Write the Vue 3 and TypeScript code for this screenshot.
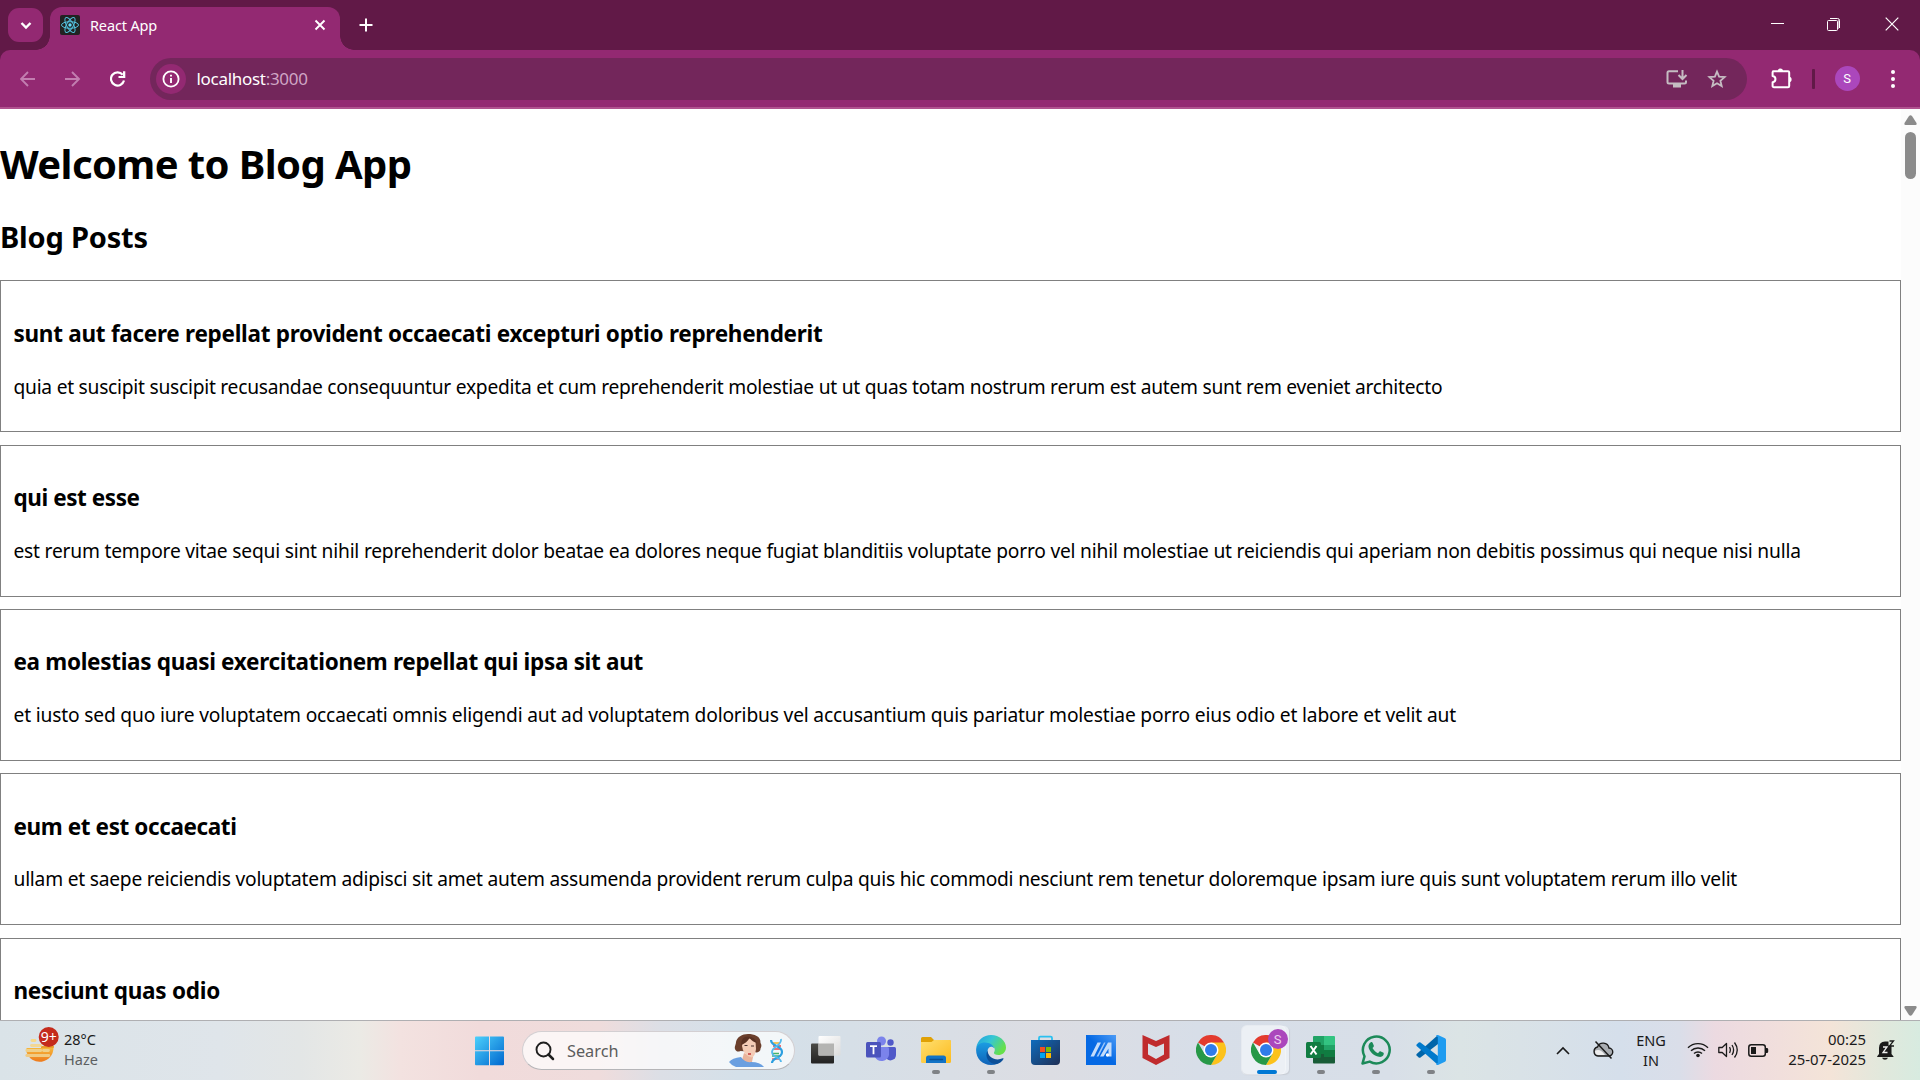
<script setup lang="ts">
interface Post {
  title: string
  body: string
  titleSpacing: number
  bodySpacing: number
}

const posts: Post[] = [
  { title: 'sunt aut facere repellat provident occaecati excepturi optio reprehenderit', body: 'quia et suscipit suscipit recusandae consequuntur expedita et cum reprehenderit molestiae ut ut quas totam nostrum rerum est autem sunt rem eveniet architecto', titleSpacing: -0.276, bodySpacing: -0.247 },
  { title: 'qui est esse', body: 'est rerum tempore vitae sequi sint nihil reprehenderit dolor beatae ea dolores neque fugiat blanditiis voluptate porro vel nihil molestiae ut reiciendis qui aperiam non debitis possimus qui neque nisi nulla', titleSpacing: -0.436, bodySpacing: -0.203 },
  { title: 'ea molestias quasi exercitationem repellat qui ipsa sit aut', body: 'et iusto sed quo iure voluptatem occaecati omnis eligendi aut ad voluptatem doloribus vel accusantium quis pariatur molestiae porro eius odio et labore et velit aut', titleSpacing: -0.31, bodySpacing: -0.172 },
  { title: 'eum et est occaecati', body: 'ullam et saepe reiciendis voluptatem adipisci sit amet autem assumenda provident rerum culpa quis hic commodi nesciunt rem tenetur doloremque ipsam iure quis sunt voluptatem rerum illo velit', titleSpacing: -0.4, bodySpacing: -0.219 },
  { title: 'nesciunt quas odio', body: '', titleSpacing: -0.256, bodySpacing: 0 },
]
</script>

<template>
  <div class="screen">
    <header class="titlebar">
      <div class="tabsearch">
        <svg width="35" height="34" viewBox="0 0 35 34"><path d="M13.5 15l4.5 4.5 4.500-4.500" fill="none" stroke="#fff" stroke-width="2.400" /></svg>
      </div>
      <div class="tab">
        <svg class="favicon" width="20" height="20" viewBox="0 0 20 20">
          <rect width="20" height="20" rx="2" fill="#222" />
          <g fill="none" stroke="#53c1de" stroke-width="1">
            <ellipse cx="10" cy="10" rx="8.500" ry="3.300" />
            <ellipse cx="10" cy="10" rx="8.500" ry="3.300" transform="rotate(60 10 10)" />
            <ellipse cx="10" cy="10" rx="8.500" ry="3.300" transform="rotate(120 10 10)" />
          </g>
          <circle cx="10" cy="10" r="1.700" fill="#61dafb" />
        </svg>
        <span class="tabtitle">React App</span>
        <svg class="tabclose" width="12" height="12" viewBox="0 0 12 12"><path d="M1.500 1.500l9 9M10.500 1.500l-9 9" stroke="#fff" stroke-width="1.900" /></svg>
        <i class="flare left"></i><i class="flare right"></i>
      </div>
      <svg class="newtab" width="14" height="14" viewBox="0 0 14 14"><path d="M7 .5v13M.5 7h13" stroke="#fff" stroke-width="2" /></svg>
      <div class="winctl">
        <svg width="13" height="14" viewBox="0 0 13 14"><path d="M0 6.500h13" stroke="#fff" /></svg>
        <svg class="restore" width="13" height="14" viewBox="0 0 13 14"><rect x=".5" y="3.500" width="10" height="10" rx="1" fill="none" stroke="#fff" /><path d="M3 1.500h7.500q2 0 2 2v7.500" fill="none" stroke="#fff" /><path d="M11.500 3v9" stroke="#b78aa9" /></svg>
        <svg width="14" height="14" viewBox="0 0 14 14"><path d="M.7.7l12.600 12.600M13.300.7L.7 13.300" stroke="#fff" stroke-width="1.200" /></svg>
      </div>
    </header>

    <div class="toolbar-back">
      <div class="toolbar">
        <svg class="nav back" width="16" height="16" viewBox="0 0 16 16"><path d="M15 8H1.500M8 1L1 8l7 7" fill="none" stroke="#c27eb0" stroke-width="1.900" /></svg>
        <svg class="nav fwd" width="16" height="16" viewBox="0 0 16 16"><path d="M0 8H13.500M7 1l7 7-7 7" fill="none" stroke="#c27eb0" stroke-width="1.900" /></svg>
        <svg class="nav reload" width="16" height="16" viewBox="0 0 16 16"><path d="M12.700 3.700A6.600 6.600 0 1 0 14 9.500" fill="none" stroke="#fff" stroke-width="2.200" /><path d="M15.300.3V7H8.500V4.900H13V.3z" fill="#fff" /></svg>
        <div class="omnibox">
          <div class="info"><svg width="18" height="18" viewBox="0 0 18 18"><circle cx="9" cy="9" r="7.600" fill="none" stroke="#fff" stroke-width="1.800" /><path d="M9 8v5M9 4.800v1.800" stroke="#fff" stroke-width="1.900" /></svg></div>
          <span class="url">localhost<span class="port">:3000</span></span>
          <svg class="install" width="22" height="20" viewBox="0 0 22 20"><path d="M12 2.200H3q-1.500 0-1.500 1.500V13q0 1.500 1.500 1.500h15.500q1.500 0 1.500-1.500v-1.500" fill="none" stroke="#c5bcc2" stroke-width="2" /><rect x="7" y="14.500" width="8" height="4" fill="#c5bcc2" /><path d="M16.500 1v8M12.500 6l4 4 4-4" fill="none" stroke="#c5bcc2" stroke-width="2" /></svg>
          <svg class="star" width="20" height="20" viewBox="0 0 20 20"><path d="M10 2.600l2.100 5.100 5.500.4-4.200 3.600 1.300 5.400-4.700-2.900-4.700 2.900 1.300-5.400-4.200-3.600 5.500-.4z" fill="none" stroke="#c5bcc2" stroke-width="1.800" /></svg>
        </div>
        <svg class="ext" width="21" height="21" viewBox="0 0 21 21"><path d="M2 3.200h15q1.200 0 1.200 1.200v13.500q0 1.300-1.200 1.300H3q-1.400 0-1.400-1.300v-3.600c3.800-.5 3.800-5.900 0-6.400V4.400z" fill="none" stroke="#fff" stroke-width="2" stroke-linejoin="round" /><path d="M6.800 3a2.600 2.600 0 0 1 5.200 0zM18 8.800a2.600 2.600 0 0 1 0 5.200z" fill="#fff" /></svg>
        <i class="vsep"></i>
        <span class="avatar">S</span>
        <svg class="kebab" width="6" height="20" viewBox="0 0 6 20"><circle cx="3" cy="3" r="2" fill="#fff" /><circle cx="3" cy="10" r="2" fill="#fff" /><circle cx="3" cy="17" r="2" fill="#fff" /></svg>
      </div>
    </div>

    <main class="viewport">
      <div class="page">
        <h1>Welcome to Blog App</h1>
        <h2>Blog Posts</h2>
        <article v-for="p in posts" :key="p.title" class="post">
          <h3 :style="{ letterSpacing: p.titleSpacing + 'px' }">{{ p.title }}</h3>
          <p :style="{ letterSpacing: p.bodySpacing + 'px' }">{{ p.body }}</p>
        </article>
      </div>
      <div class="scrollbar">
        <svg width="13" height="10" viewBox="0 0 13 10"><path d="M5 1q1.500-1.500 3 0l4.500 7q.5 2-1 2h-10q-1.500 0-1-2z" fill="#8b8b8b" /></svg>
        <i class="thumb"></i>
        <svg class="down" width="13" height="10" viewBox="0 0 13 10"><path d="M5 9q1.500 1.500 3 0l4.500-7q.5-2-1-2h-10q-1.500 0-1 2z" fill="#8b8b8b" /></svg>
      </div>
    </main>

    <footer class="taskbar">
      <div class="weather">
        <svg width="36" height="36" viewBox="0 0 36 36">
          <defs><linearGradient id="sun" x1="0" y1="0" x2="0" y2="1"><stop offset="0" stop-color="#f6b73c" /><stop offset="1" stop-color="#ee7a1c" /></linearGradient></defs>
          <path d="M2.500 21H29.500A13.800 13.800 0 0 1 2.500 25z" fill="url(#sun)" />
          <path d="M17 21h12.800l.2-2H17z" fill="#eba02b" />
          <g stroke-linecap="round" stroke-width="2.800"><path d="M8 13.500h3" stroke="#f6d98a" /><path d="M7.500 18.500h9" stroke="#f3d793" /><path d="M2.800 23.500h14M19.500 23.500h5" stroke="#efd08a" /><path d="M2.800 28.500h22" stroke="#f0cb84" /></g>
          <circle cx="24.700" cy="10" r="10" fill="#c42b1c" />
          <text x="24.700" y="15" text-anchor="middle" font-size="14" fill="#fff">9+</text>
        </svg>
        <div class="wtext"><span>28°C</span><span class="cond">Haze</span></div>
      </div>

      <div class="apps">
        <svg class="start" width="30" height="30" viewBox="0 0 30 30">
          <defs><linearGradient id="win" x1="0" y1="0" x2="1" y2="1"><stop offset="0" stop-color="#4cd0fb" /><stop offset="1" stop-color="#0067cf" /></linearGradient></defs>
          <path d="M0 1.500Q0 .5 1 .5h13v13.700H0zM15 .5h13q1 0 1 1v12.700H15zM0 15.200h14v14H1q-1 0-1-1zM15 15.200h14v13q0 1-1 1H15z" fill="url(#win)" />
        </svg>
        <div class="search">
          <svg width="20" height="20" viewBox="0 0 20 20"><circle cx="8.500" cy="8.500" r="7" fill="none" stroke="#1f1f1f" stroke-width="1.900" /><path d="M13.500 13.500l4.500 4.500" stroke="#1f1f1f" stroke-width="2.500" stroke-linecap="round" /></svg>
          <span class="hint">Search</span>
          <svg class="lady" width="36" height="34" viewBox="0 0 36 34">
            <path d="M7.500 17C4 14 7 11 7 8 8 3 13 0 19 0s13 2 12.500 9c2 3 0 5 0 6 0 3-4 4-6 3l-14-1q-3 1-4 0z" fill="#6b3f2c" />
            <path d="M13 26l2-7 9 4-1 5q-5 3-10-2z" fill="#e9b49b" />
            <path d="M14 7q6-5 12.500 0l.5 8q-1 8-4.500 8.500Q14 21 13 12z" fill="#f4ccb6" />
            <path d="M12 11q6-2 8.500-7 3 4 7.500 5-2-6.500-9-6.500T12 11z" fill="#5a3223" />
            <path d="M0 28q3-4 12-5 4 6 10 5 9 0 13 5H7q-5-2-7-5z" fill="#6a9fe0" />
            <path d="M15.500 11.500h3M22 12h3" stroke="#4b3230" stroke-width="1.200" /><path d="M19 20h3" stroke="#c53a3a" stroke-width="1.500" />
          </svg>
          <svg class="dna" width="13" height="26" viewBox="0 0 13 26">
            <path d="M2 5h8" stroke="#f0b429" stroke-width="1.500" /><path d="M3 8h8M4 11h6" stroke="#e5484d" stroke-width="1.500" /><path d="M3 15.500h6M2 18h9" stroke="#45b36b" stroke-width="1.500" /><path d="M2 21h8" stroke="#e5484d" stroke-width="1.300" />
            <path d="M1 2c0 7 11 5 11 12S2 19 2 25" fill="none" stroke="#2d9fe0" stroke-width="2.200" /><path d="M11 1C12 8 2 8 2 14s9 5 9 10" fill="none" stroke="#56b9ec" stroke-width="1.800" />
          </svg>
        </div>

        <div class="slot"><svg width="30" height="30" viewBox="0 0 30 30"><defs><linearGradient id="tvd" x1="0" y1="0" x2="0" y2="1"><stop offset="0" stop-color="#4a4a46" /><stop offset="1" stop-color="#222" /></linearGradient><linearGradient id="tvl" x1="0" y1="0" x2="1" y2="1"><stop offset="0" stop-color="#fff" /><stop offset="1" stop-color="#dcdcdc" /></linearGradient></defs><rect x="0" y="8.500" width="23" height="20" rx="1" fill="url(#tvd)" /><rect x="7.500" y="1" width="22" height="19.500" rx="1" fill="url(#tvl)" /><path d="M7.500 8.500H23v12H7.500z" fill="#b4b4b2" /></svg></div>

        <div class="slot"><svg width="30" height="30" viewBox="0 0 30 30"><circle cx="24.500" cy="7.500" r="3.200" fill="#5059c9" /><path d="M20 12h8.500q1.500 0 1.500 1.500V20a5.500 5.500 0 0 1-10 3z" fill="#5059c9" /><circle cx="15.500" cy="6" r="4.500" fill="#7b83eb" /><path d="M9 12h12.500q1.500 0 1.500 1.500V20a7.500 7.500 0 0 1-14 2z" fill="#7b83eb" /><rect y="7" width="15" height="15.500" rx="1.500" fill="#4b53bc" /><path d="M4 11.200h7M7.500 11.200v8" stroke="#fff" stroke-width="1.800" /></svg></div>

        <div class="slot"><svg width="30" height="30" viewBox="0 0 30 30"><defs><linearGradient id="fold" x1="0" y1="0" x2="1" y2="1"><stop offset="0" stop-color="#ffdf70" /><stop offset="1" stop-color="#fdbb1e" /></linearGradient></defs><path d="M0 3.500Q0 2 1.500 2H10l3 3h15q2 0 2 1.500V14H0z" fill="#e0a106" /><path d="M0 7h10.500L13 5h15.500Q30 5 30 6.500v20q0 1.500-1.500 1.500h-27Q0 28 0 26.500z" fill="url(#fold)" /><path d="M5 28v-5q0-2.500 2.500-2.500h15Q25 20.500 25 23v5z" fill="#1273c6" /><path d="M9 24.500h12.500" stroke="#0b4f94" stroke-width="1.300" stroke-linecap="round" /></svg><i class="dot"></i></div>

        <div class="slot"><svg width="30" height="30" viewBox="0 0 30 30"><defs><linearGradient id="e1" x1="0" y1="0" x2="1" y2=".5"><stop offset="0" stop-color="#1f9fe0" /><stop offset=".5" stop-color="#36c6d4" /><stop offset="1" stop-color="#66e04a" /></linearGradient><linearGradient id="e2" x1="0" y1="0" x2="0" y2="1"><stop offset="0" stop-color="#1b9de2" /><stop offset="1" stop-color="#0f62b8" /></linearGradient></defs><path d="M.3 12.500C1.500 5 7.500 0 15 0c8.500 0 15 6 15 12.500 0 5-4 7.500-7.500 7.500-3 0-5-1-4.500-2.500 2.500-4-1-7.500-5-7.500C7 10 2.500 13 .3 12.500z" fill="url(#e1)" /><path d="M.1 15C0 10 4.500 7.500 9 7.500c5 0 8.500 2.800 9.500 6-3-3.500-7-1-7 3 0 5 5 9.500 11 8.500l4 0C24 28.500 20 30 15 30 6.500 30 0 23.500.1 15z" fill="url(#e2)" /><path d="M11.500 15.500c-3.500 7 2 14 9 13.500 3-.7 5.500-2.500 7-5 .3-.7-.2-1-.8-.7-6.500 3-14.700-.3-15.200-7.800z" fill="#0c4f98" /></svg><i class="dot"></i></div>

        <div class="slot"><svg width="30" height="30" viewBox="0 0 30 30"><defs><linearGradient id="st" x1="0" y1="0" x2="1" y2="1"><stop offset="0" stop-color="#0f6cbd" /><stop offset="1" stop-color="#1f2f55" /></linearGradient></defs><path d="M8 6V3q0-1.300 1.300-1.300h10.400q1.300 0 1.300 1.300v3" fill="none" stroke="#2bc0f0" stroke-width="1.800" /><path d="M0 5h29v21q0 4-4 4H4q-4 0-4-4z" fill="url(#st)" /><path d="M9 12h5v5H9z" fill="#f25022" /><path d="M15 12h5v5h-5z" fill="#7fba00" /><path d="M9 18h5v5H9z" fill="#00a4ef" /><path d="M15 18h5v5h-5z" fill="#ffb900" /></svg></div>

        <div class="slot"><svg width="30" height="30" viewBox="0 0 30 30"><defs><linearGradient id="ma" x1="0" y1="1" x2="1" y2="0"><stop offset=".5" stop-color="#0569e4" /><stop offset="1" stop-color="#4c9bf6" /></linearGradient></defs><path d="M0 0h30v30H0z" fill="url(#ma)" /><path d="M4.500 21.500L11.500 7.500H15L8 21.500z" fill="#c3dcfb" /><path d="M10.500 21.500L18 7.500h1.500L12.500 21.500z" fill="#9cc6fa" /><path d="M14 21.500L22 7.500h3.500v14h-3V13.500l-5 8z" fill="#c3dcfb" /><circle cx="21.500" cy="20" r="1.700" fill="#fff" /></svg></div>

        <div class="slot"><svg width="30" height="30" viewBox="0 0 30 30"><path d="M1.500 0L15 6 28.500 0v23L15 30 1.500 23zM7 8.500v11l8 4.500 8-4.500v-11L15 12z" fill="#c02b2d" fill-rule="evenodd" /></svg></div>

        <div class="slot"><svg width="30" height="30" viewBox="0 0 30 30"><path d="M15 15L2 7.500A15 15 0 0 1 28 7.500z" fill="#e33b2e" /><path d="M28 7.500A15 15 0 0 1 15 30l6.500-11.200L15 7.500z" fill="#fcc21b" /><path d="M2 7.500A15 15 0 0 0 15 30l6.500-11.200L8.500 18.700z" fill="#279847" /><circle cx="15" cy="15" r="7.500" fill="#fff" /><circle cx="15" cy="15" r="6" fill="#2f7cea" /></svg></div>

        <div class="slot active"><i class="tile"></i><svg width="30" height="30" viewBox="0 0 30 30"><path d="M15 15L2 7.500A15 15 0 0 1 28 7.500z" fill="#e33b2e" /><path d="M28 7.500A15 15 0 0 1 15 30l6.500-11.200L15 7.500z" fill="#fcc21b" /><path d="M2 7.500A15 15 0 0 0 15 30l6.500-11.200L8.500 18.700z" fill="#279847" /><circle cx="15" cy="15" r="7.500" fill="#fff" /><circle cx="15" cy="15" r="6" fill="#2f7cea" /></svg><b class="profile">S</b><i class="dot wide"></i></div>

        <div class="slot"><svg width="30" height="30" viewBox="0 0 30 30"><path d="M7 2q0-1 1-1h10v9H7z" fill="#21a366" /><path d="M18 1h10q1 0 1 1v8H18z" fill="#33c481" /><path d="M7 10h11v9H7z" fill="#107c41" /><path d="M18 10h11v9H18z" fill="#21a366" /><path d="M7 19h22v8.500q0 1-1 1H8q-1 0-1-1z" fill="#185c37" /><path d="M18 15h11v7H18z" fill="#107c41" /><rect y="7" width="15" height="16" rx="1.500" fill="#107c41" /><path d="M4.500 11l6 8.500M10.500 11l-6 8.500" stroke="#fff" stroke-width="2" /></svg><i class="dot"></i></div>

        <div class="slot"><svg width="30" height="30" viewBox="0 0 30 30"><path d="M1.500 28.500l2-7.200A13.400 13.400 0 1 1 8.700 26.600z" fill="none" stroke="#1c8a59" stroke-width="2.500" stroke-linejoin="round" /><path d="M9.500 7.500c.8-.6 1.800-.5 2.200.4l1.100 2.500c.2.500 0 1-.3 1.500l-1 1.200c1.200 2.300 3 4 5.500 5.100l1.300-1.500c.4-.5.900-.5 1.500-.3l2.300 1.200c.7.400.8.800.6 1.600-.6 2-2.600 3-4.700 2.600C12.500 20.700 8.300 16.500 7.500 12c-.3-1.800.7-3.600 2-4.500z" fill="#1c8a59" /></svg><i class="dot"></i></div>

        <div class="slot"><svg width="30" height="30" viewBox="0 0 30 30"><path d="M22 0v9L4.500 22.500Q3.500 23 2.700 22.400L.6 20.500Q0 19.700.6 19z" fill="#0065a9" /><path d="M22 30v-9L4.500 7.500Q3.500 7 2.700 7.600L.6 9.500Q0 10.300.6 11z" fill="#007acc" /><path d="M22 0l7 3.300q1 .5 1 1.600v20.200q0 1.100-1 1.600L22 30q-1.500.2-2-1l1.800-1V2L20 1q.5-1.200 2-1z" fill="#1f9cf0" /></svg><i class="dot"></i></div>
      </div>

      <div class="tray">
        <svg class="chev" width="14" height="9" viewBox="0 0 14 9"><path d="M1 8l6-6 6 6" fill="none" stroke="#1a1a1a" stroke-width="1.600" /></svg>
        <svg class="cloud" width="22" height="18" viewBox="0 0 22 18"><path d="M6 15h10.500a4 4 0 0 0 .5-8 6 6 0 0 0-11.500-1A4.600 4.600 0 0 0 6 15z" fill="#a9adb2" stroke="#1a1a1a" stroke-width="1.400" /><path d="M3 10q5-3 10 4H6q-3-.5-3-4z" fill="#eee" /><path d="M3.500.5l16 17" stroke="#1a1a1a" stroke-width="1.500" /></svg>
        <div class="lang"><span>ENG</span><span>IN</span></div>
        <svg class="wifi" width="22" height="16" viewBox="0 0 22 16"><g fill="none" stroke="#1a1a1a" stroke-width="1.400"><path d="M1 5.800a14 14 0 0 1 20 0M4 8.800a10 10 0 0 1 14 0M7 11.600a5.800 5.800 0 0 1 8 0" /></g><circle cx="11" cy="13.500" r="1.800" fill="#1a1a1a" /></svg>
        <svg class="vol" width="21" height="18" viewBox="0 0 21 18"><g fill="none" stroke="#1a1a1a" stroke-width="1.300"><path d="M.8 6.500h3.400l4.300-4v13l-4.300-4H.8zM11.500 6.200q1.700 2.800 0 5.600M14 4q3.200 5 0 10M16.500 1.500q5.500 7.500 0 15" stroke-linejoin="round" /></g></svg>
        <svg class="bat" width="21" height="13" viewBox="0 0 21 13"><rect x=".8" y=".8" width="16.500" height="11.400" rx="2.500" fill="none" stroke="#1a1a1a" stroke-width="1.500" /><path d="M3 3h5v7H3zM17.500 4h1.200q1.500 0 1.500 1.200v2.600Q20.200 9 18.700 9h-1.200z" fill="#1a1a1a" /></svg>
        <div class="clock"><span>00:25</span><span>25-07-2025</span></div>
        <svg class="bell" width="18" height="20" viewBox="0 0 18 20"><path d="M2 8Q2 1.500 8 1.500h3.500v4h3V14l2 2.500v.5H.2v-.7L2 14zM5 17.800h6q-.8 2-3 2t-3-2z" fill="#1a1a1a" /><path d="M6 7h4L6 12.500h4.500" fill="none" stroke="#eee" stroke-width="1.300" /><path d="M12.500 1h4L12.500 6H17" fill="none" stroke="#1a1a1a" stroke-width="1.300" /></svg>
      </div>
    </footer>
  </div>
</template>

<style>
html, body { margin: 0; overflow: hidden; }
</style>

<style scoped>
.screen { display: flex; flex-direction: column; width: 1920px; height: 1080px; overflow: hidden; background: #fff; font-family: "Noto Sans", "Open Sans", sans-serif; }
svg { display: block; flex: none; }

.titlebar { display: flex; height: 50px; flex: none; background: #611947; }
.tabsearch { width: 35px; height: 34px; margin: 8px 7px 0 8px; border-radius: 11px; background: #932972; }
.tab { position: relative; display: flex; align-items: center; width: 290px; height: 43px; margin-top: 7px; border-radius: 12px 12px 0 0; background: #932972; }
.favicon { margin: -7px 0 0 10px; }
.tabtitle { margin: -8px 0 0 10px; flex: 1; color: #fff; font-size: 14.500px; line-height: 20px; letter-spacing: -0.150px; }
.tabclose { margin: -7px 14.500px 0 0; }
.flare { position: absolute; bottom: 0; width: 14px; height: 14px; }
.flare.left { left: -14px; background: radial-gradient(circle at 0 0, transparent 13.500px, #932972 14px); }
.flare.right { right: -14px; background: radial-gradient(circle at 100% 0, transparent 13.500px, #932972 14px); }
.newtab { margin: 18px 0 0 19px; }
.winctl { display: flex; margin: 17px 21.500px 0 auto; gap: 43px; }
.restore { margin-right: 1.500px; }

.toolbar-back { flex: none; background: #611947; }
.toolbar { display: flex; align-items: center; height: 57px; border-bottom: 2px solid #b0528f; border-radius: 10px 10px 0 0; background: #932972; }
.nav.back { margin-left: 20px; }
.nav.fwd { margin-left: 29px; }
.nav.reload { margin-left: 29px; }
.omnibox { display: flex; align-items: center; box-sizing: border-box; width: 1597px; height: 42px; margin-left: 24px; margin-top: 1px; padding-left: 6px; border-radius: 21px; background: #73265b; }
.info { display: grid; place-items: center; width: 30px; height: 30px; border-radius: 50%; background: #932972; }
.url { margin-left: 10.500px; color: #fff; font-size: 17px; letter-spacing: -0.300px; line-height: 24px; flex: 1; }
.port { color: #cfa5c4; }
.install { margin-right: 19px; }
.star { margin-right: 20px; }
.ext { margin-left: 24px; }
.vsep { width: 2.500px; height: 20px; margin-left: 20px; background: #611947; border-radius: 1px; }
.avatar { display: grid; place-items: center; width: 25px; height: 25px; margin-left: 20px; border-radius: 50%; background: #ab47bc; color: #fff; font: 13px Roboto, sans-serif; }
.kebab { margin-left: 30px; }

.viewport { display: flex; flex: none; height: 911px; overflow: hidden; }
.page { width: 1901px; overflow: hidden; color: #000; }
h1, h2, h3, p { margin: 0; white-space: nowrap; }
h1 { margin-top: 27px; font-size: 40px; line-height: 56px; height: 56px; letter-spacing: -0.600px; }
h2 { margin-top: 25px; font-size: 29px; line-height: 40px; height: 40px; letter-spacing: -0.200px; }
.post { box-sizing: border-box; height: 152px; margin-bottom: 12.300px; padding: 37.400px 12.500px 0; border: 1px solid #808080; }
h2 + .post { margin-top: 23.400px; }
h3 { font-size: 22.500px; line-height: 30px; }
p { margin-top: 23.800px; font-size: 19.200px; line-height: 28px; }
.scrollbar { display: flex; flex-direction: column; align-items: center; width: 19px; background: #fcfcfc; padding: 6px 0 4px; box-sizing: border-box; }
.thumb { width: 11px; height: 47px; margin-top: 7px; border-radius: 6px; background: #8b8b8b; }
.down { margin-top: auto; }

.taskbar { display: flex; flex: none; height: 60px; box-sizing: border-box; border-top: 1px solid #afafb2; background: linear-gradient(90deg, #dae3e8 0, #dfe5ea 220px, #e3e6e6 300px, #ebeae5 360px, #f3e2e0 400px, #f1dbdb 480px, #efdcdc 600px, #dcdfe6 660px, #d4e0e9 740px, #d6dfe7 850px, #dcdde3 1050px, #d7dee8 1200px, #d8dfe8 1390px, #dbe4e5 1460px, #d9e2e7 1520px, #d5dfeb 1620px, #dadee9 1680px, #ecdae1 1715px, #f1dfdc 1780px, #f4e4d8 1830px, #e2e8dc 1880px, #d7ebe0 1920px); }
.weather { display: flex; width: 475px; }
.weather > svg { margin: 6px 0 0 24px; }
.wtext { display: flex; flex-direction: column; align-items: flex-start; margin: 8px 0 0 4px; font-size: 14.500px; line-height: 20px; color: #1a1a1a; }
.cond { color: #5c5f62; }
.apps { display: flex; align-items: flex-start; width: 983.500px; }
.start { margin-top: 14.500px; }
.search { display: flex; align-items: center; box-sizing: border-box; width: 273.500px; height: 39px; margin: 10px 3.500px 0 16.500px; padding-left: 12.500px; border: 1px solid #d3cfd2; border-bottom-color: #b5b5b8; border-radius: 20px; background: rgba(255, 255, 255, 0.72); font-size: 16.300px; color: #5c5c5c; }
.hint { margin-left: 12px; flex: 1; }
.lady { margin-right: 5px; }
.dna { margin-right: 11.500px; }
.slot { position: relative; display: flex; justify-content: center; width: 55px; height: 59px; padding-top: 14px; box-sizing: border-box; }
.slot svg { position: relative; }
.dot { position: absolute; left: 23.500px; top: 49px; width: 8px; height: 4px; border-radius: 2px; background: #7f8286; }
.dot.wide { left: 18px; width: 20px; background: #0078d4; }
.tile { position: absolute; left: 3.500px; top: 5px; width: 43px; height: 48px; border-radius: 5px; background: #ecf0f5; box-shadow: 0 0 0 1px rgba(255,255,255,.4), 4px 0 0 #e9eef4, 5px 1px 1px #c9ced6, 0 1px 1px #c5cad2; }
.profile { position: absolute; left: 29px; top: 8px; display: grid; place-items: center; width: 20px; height: 20px; border-radius: 50%; background: #ab47bc; color: #ecd0f0; font: 13px Roboto, sans-serif; }
.tray { display: flex; align-items: center; flex: 1; padding-bottom: 1px; font-size: 14.500px; line-height: 20px; color: #1a1a1a; }
.chev { margin-left: 97.500px; }
.cloud { margin-left: 22px; }
.lang { display: flex; flex-direction: column; align-items: center; width: 40px; margin-left: 17px; }
.wifi { margin-left: 16px; }
.vol { margin-left: 8.500px; }
.bat { margin-left: 9.500px; }
.clock { display: flex; flex-direction: column; align-items: flex-end; width: 97px; padding-bottom: 2px; font-size: 14.900px; }
.bell { margin-left: 10.500px; }
</style>
